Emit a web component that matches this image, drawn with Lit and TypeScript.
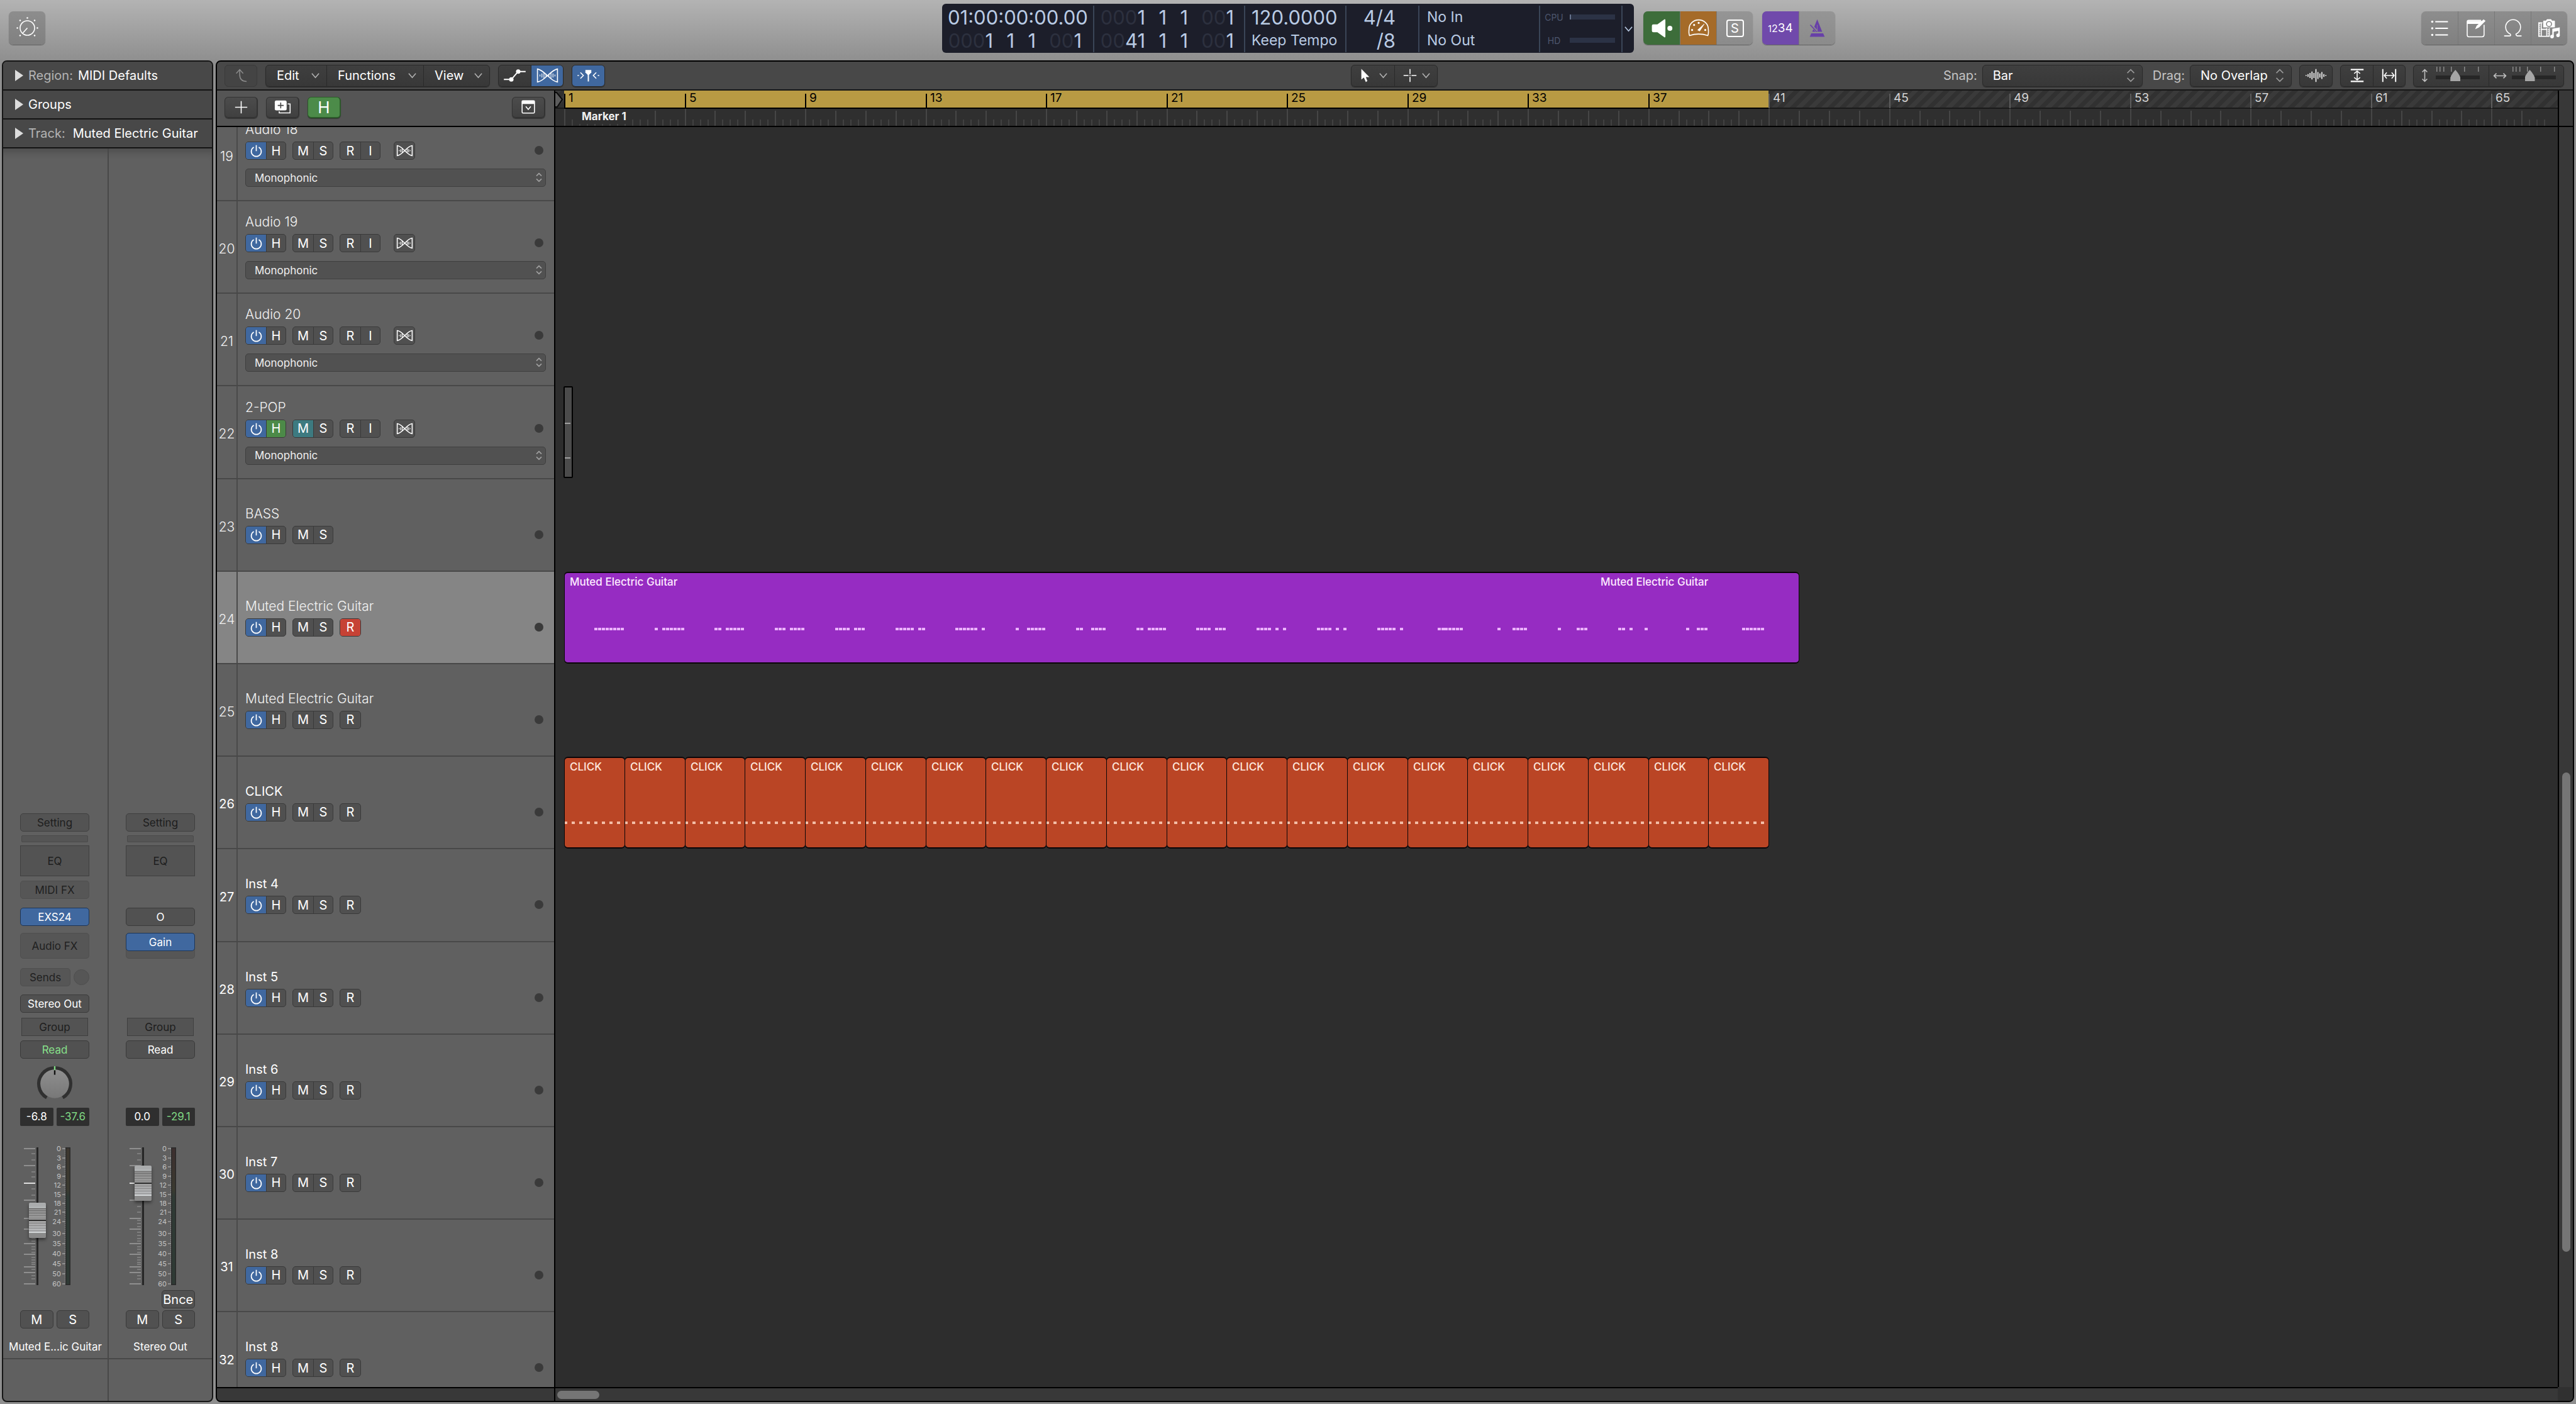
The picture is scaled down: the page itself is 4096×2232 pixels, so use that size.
import { LitElement, html, css, svg, nothing } from "lit";
import type { TemplateResult } from "lit";
import { customElement, property } from "lit/decorators.js";
import { classMap } from "lit/directives/class-map.js";
import { styleMap } from "lit/directives/style-map.js";

const SCALE = 0.8;
const icon = (w: number, h: number, body: unknown) => html`<svg
  class="icon" width=${Math.round(w * SCALE)} height=${Math.round(h * SCALE)}
  viewBox="0 0 ${w} ${h}" fill="none" stroke="currentColor" stroke-width="2" aria-hidden="true">${body}</svg>`;

const chevron = () => icon(16, 10, svg`<path d="M1 1L8 9L15 1"/>`);
const upDown = () => icon(18, 28, svg`<path d="M2 9L9 2L16 9M2 19L9 26L16 19"/>`);
const upDownSmall = () => icon(12, 20, svg`<path d="M1 7L6 2L11 7M1 13L6 18L11 13"/>`);

const icons = {
  knob: () => icon(44, 44, svg`<circle cx="22" cy="22" r="14.5"/><path d="M22 22L13 32"/>
    <g fill="currentColor" stroke="none"><circle cx="22" cy="2" r="1.6"/><circle cx="7.5" cy="7" r="1.6"/><circle cx="36.5" cy="7" r="1.6"/>
    <circle cx="2" cy="22" r="1.6"/><circle cx="42" cy="22" r="1.6"/><circle cx="7.5" cy="37" r="1.6"/><circle cx="36.5" cy="37" r="1.6"/></g>`),
  back: () => icon(24, 28, svg`<path d="M23 26C13 26 9 20 9 12V2M2 10L9 2L16 10"/>`),
  automation: () => icon(46, 28, svg`<path d="M1 22H12M16 22L30 6M30 6H45" stroke-width="2.5"/>
    <g fill="currentColor" stroke="none"><circle cx="16" cy="22" r="4.5"/><circle cx="30" cy="6" r="4.5"/></g>`),
  flex: () => icon(44, 30, svg`<path d="M2 2V28C16 27 28 4 42 2V28C28 27 16 4 2 2Z"/>
    <path d="M7 13V17M11 11V19M15 9V21M19 12V18M25 12V18M29 9V21M33 11V19M37 13V17" stroke-width="1.5"/>`),
  flexSmall: () => icon(34, 24, svg`<path d="M2 2V22C13 21 21 3 32 2V22C21 21 13 3 2 2Z"/>
    <path d="M6 11V13M9 9V15M12 8V16M22 8V16M25 9V15M28 11V13" stroke-width="1.5"/>`),
  catchFilter: () => icon(46, 28, svg`<path d="M1 14H4M7 8L13 14L7 20M39 8L33 14L39 20M42 14H45"/>
    <path d="M17 3H29V8L23 14L17 8Z" fill="currentColor" stroke="none"/><path d="M23 12V26" stroke-width="2.5"/>`),
  plus: () => icon(26, 26, svg`<path d="M13 1V25M1 13H25"/>`),
  duplicate: () => icon(34, 28, svg`<rect x="1" y="1" width="24" height="20" rx="3" fill="currentColor" stroke="none"/>
    <path d="M13 5V17M7 11H19" stroke="#444"/><path d="M27 8H32V26H10V23"/>`),
  panel: () => icon(28, 28, svg`<rect x="1.5" y="1.5" width="25" height="25" rx="2"/><rect x="1" y="1" width="26" height="7" fill="currentColor" stroke="none"/>
    <path d="M9 13L14 19L19 13"/>`),
  pointer: () => icon(22, 30, svg`<path d="M3 2V23L8 19L12 28L15 26L12 18L19 18Z" fill="currentColor" stroke="none"/>`),
  crosshair: () => icon(28, 28, svg`<path d="M14 1V11M14 17V27M1 14H11M17 14H27M14 13V15" stroke-width="2"/>`),
  wave: () => icon(44, 28, svg`<path d="M2 13V15M6 11V17M10 9V19M14 6V22M18 9V19M22 1V27M26 7V21M30 10V18M34 7V21M38 11V17M42 13V15"/>`),
  fitVertical: () => icon(28, 30, svg`<path d="M1 3H27M1 27H27" stroke-width="3"/><path d="M14 6V24M8 11L14 6L20 11M8 19L14 24L20 19"/>`),
  fitHorizontal: () => icon(30, 28, svg`<path d="M2 1V27M28 1V27" stroke-width="2.5"/><path d="M5 14H25M10 8L5 14L10 20M20 8L25 14L20 20"/>`),
  zoomVertical: () => icon(14, 28, svg`<path d="M7 2V26M2 7L7 2L12 7M2 21L7 26L12 21"/>`),
  zoomHorizontal: () => icon(28, 14, svg`<path d="M2 7H26M7 2L2 7L7 12M21 2L26 7L21 12"/>`),
  speaker: () => icon(44, 40, svg`<g fill="currentColor" stroke="none"><path d="M2 15Q2 12 5 12H13L27 2Q29 1 29 4V36Q29 39 27 38L13 28H5Q2 28 2 25Z"/><circle cx="38" cy="20" r="5"/></g>`),
  gauge: () => icon(42, 36, svg`<path d="M3 33Q1 29 2 20A19 18 0 0 1 40 20Q41 29 39 33Q21 27 3 33Z"/><path d="M19 22L32 10L23 24Z" fill="currentColor" stroke-width="1"/>
    <g fill="currentColor" stroke="none"><circle cx="8" cy="22" r="2"/><circle cx="12" cy="12" r="2"/><circle cx="21" cy="8" r="2"/><circle cx="34" cy="22" r="2"/></g>`),
  metronome: () => icon(34, 38, svg`<path d="M17 1L27 26H7Z" fill="currentColor" stroke="none"/><path d="M5 29H29L32 36H2Z" fill="currentColor" stroke="none"/>
    <path d="M5 13L16 25" stroke="#8e8e8e" stroke-width="5"/><path d="M17 12V26" stroke="#8e8e8e" stroke-width="1"/><path d="M3 12L16 26"/>`),
  list: () => icon(36, 32, svg`<path d="M9 3H34M9 16H34M9 29H34" stroke-width="2.5"/>
    <g fill="currentColor" stroke="none"><circle cx="3" cy="3" r="2.2"/><circle cx="3" cy="16" r="2.2"/><circle cx="3" cy="29" r="2.2"/></g>`),
  notepad: () => icon(42, 38, svg`<path d="M36 12V32Q36 36 32 36H5Q2 36 2 32V6Q2 3 5 3H30"/><path d="M2 4H33L26 10H2Z" fill="currentColor" stroke="none"/>
    <path d="M18 21L21 14L35 1L39 4L26 17Z" fill="currentColor" stroke="none"/>`),
  loop: () => icon(38, 36, svg`<path d="M1 34H11Q16 34 13 30A15 15 0 1 1 25 30Q24 32 27 34H36"/>`),
  media: () => icon(44, 40, svg`<rect x="1" y="9" width="21" height="27"/><path d="M6 9V36M17 9V36M6 22H17" stroke-width="2"/><path d="M3 10V36M20 10V36" stroke-dasharray="2 2"/>
    <path d="M11 4H15L17 1H26L28 4H32Q34 4 34 6V19H9V6Q9 4 11 4Z" fill="currentColor" stroke="#868686" stroke-width="1.5"/>
    <circle cx="21.5" cy="11.500" r="5" stroke="#868686" stroke-width="2"/>
    <path d="M28 21L43 18V34H40V25L31 27V37H28Z" fill="currentColor" stroke="none"/>
    <g fill="currentColor" stroke="none"><circle cx="27.5" cy="36.500" r="3.5"/><circle cx="39.500" cy="34" r="3.500"/></g>`),
  power: () => icon(24, 26, svg`<path d="M7 6A10 10 0 1 0 17 6M12 2V14" stroke-width="2.2"/>`),
};

const shared = css`
  :host { box-sizing: border-box; }
  *, *::before, *::after { box-sizing: border-box; }
  button, select, input { font: inherit; color: inherit; margin: 0; padding: 0; border: 0; background: none; }
  button { display: flex; align-items: center; justify-content: center; }
  .icon { display: block; flex: none; overflow: visible; }
  select { appearance: none; }
`;

/* ---------- Transport display ---------- */

@customElement("lcd-display")
export class LcdDisplay extends LitElement {
  static styles = [shared, css`
    :host { display: grid; grid-template-columns: 240px 240px 161px 116px 192px 131px 20px; height: 78px; background: #1c1e2a; border-radius: 6px; color: #b9cbe4; font-size: 31px; }
    .cell { display: grid; grid-template-rows: 37px 37px; align-content: start; margin: 3px 0; border-left: 2px solid #3a4557; line-height: 37px; white-space: nowrap; }
    .cell:first-child { border-left: 0; }
    .time { padding-left: 9px; }
    .digits { display: grid; grid-template-columns: 81px 34px 34px 73px; text-align: right; }
    .dim { color: #2c303e; }
    .tempo { padding-left: 10px; }
    .word { font-size: 23px; }
    .sign { text-align: right; padding-right: 36px; }
    .io { padding-left: 12px; font-size: 23px; }
    .load { display: grid; grid-template-columns: 30px 72px; column-gap: 10px; padding-left: 7px; align-items: center; font-size: 14px; color: #4e576e; }
    .load span { text-align: center; }
    .meter { height: 8px; background: #2b3245; }
    .meter.on { border-left: 2px solid #65728c; }
    .more { border-left: 2px solid #3a4557; margin: 3px 0; }
  `];
  digits(bar: string, pad: string) {
    return html`<div class="digits"><span><span class="dim">${pad}</span>${bar}</span><span>1</span><span>1</span><span><span class="dim">00</span>1</span></div>`;
  }
  render() {
    return html`
      <div class="cell"><span class="time">01:00:00:00.00</span>${this.digits("1", "000")}</div>
      <div class="cell">${this.digits("1", "000")}${this.digits("41", "00")}</div>
      <div class="cell tempo"><span>120.0000</span><span class="word">Keep Tempo</span></div>
      <div class="cell sign"><span>4/4</span><span>/8</span></div>
      <div class="cell io"><span>No In</span><span>No Out</span></div>
      <div class="cell load"><span>CPU</span><div class="meter on"></div><span>HD</span><div class="meter"></div></div>
      <button class="more" aria-label="Display options">${chevron()}</button>`;
  }
}

/* ---------- Mixer channel strip ---------- */

const FADER_MAJOR = [2, 29, 57, 84, 113, 130, 153, 170, 190, 199, 217];
const FADER_MINOR = [10, 20, 39, 47, 66, 76, 94, 103, 116, 121, 126, 135, 140, 145, 149, 158, 162, 167, 175, 179, 183, 186, 194, 204, 209];
const METER: [string, number][] = [["0", 2], ["3", 17], ["6", 31], ["9", 46], ["12", 60], ["15", 75], ["18", 89], ["21", 103], ["24", 118], ["30", 137], ["35", 153], ["40", 169], ["45", 185], ["50", 201], ["60", 217]];

@customElement("channel-strip")
export class ChannelStrip extends LitElement {
  @property() name = "";
  @property() gain = "";
  @property() peak = "";
  @property({ type: Number }) level = 0;
  @property({ type: Boolean }) master = false;
  static styles = [shared, css`
    :host { display: flex; flex-direction: column; justify-content: flex-end; font-size: 17px; color: #fff; }
    .stack { width: 110px; margin-left: 27px; display: flex; flex-direction: column; }
    .slot { height: 29px; display: flex; gap: 5px; }
    .slot > button { flex: 1; min-width: 0; border: 1px solid #3a3a3a; border-radius: 5px; background: #515151; }
    .slot > button.dim { color: #1d1d1d; border-color: #3f3f3f; background: #535353; }
    .slot > button.ghost { color: #1f1f1f; border-color: #4f4f4f; background: #565656; }
    .slot > button.square { border-radius: 0; }
    .slot > button.blue { background: #40689f; border-color: #1d3556; }
    .slot > button.green { color: #87e08a; }
    .slot > button.knobless { flex: none; width: 25px; height: 25px; border-radius: 50%; margin-top: 2px; }
    .gr { height: 11px; margin: 6px 2px 0; border: 1px solid #4a4a4a; background: #555; border-radius: 2px; }
    .eq { height: 49px; margin-top: 5px; }
    .midi { margin-top: 7px; }
    .inst { margin-top: 14px; }
    .fx { height: 41px; margin-top: 11px; }
    .fx.loaded { border: 1px solid #4f4f4f; background: #565656; border-radius: 5px; }
    .fx.loaded > button { height: 29px; margin: -1px; }
    .sends { margin-top: 15px; }
    .out { margin-top: 13px; }
    .group { margin: 8px 2px 0; }
    .auto { margin-top: 7px; }
    .pan { height: 56px; margin-top: 12px; justify-content: center; }
    .vals { margin-top: 10px; }
    .vals output { flex: 1; text-align: center; line-height: 29px; background: #2f2f2f; border-radius: 2px; }
    .vals .peak { color: #7fd883; }
    .fader { position: relative; height: 219px; margin-top: 34px; }
    .scale { display: block; overflow: visible; }
    .scale text { font-size: 11px; fill: #c4c4c4; }
    .fader input { position: absolute; left: 14px; top: 0; width: 27px; height: 219px; appearance: none; writing-mode: vertical-lr; direction: rtl;
      background: linear-gradient(90deg, transparent 12px, #262626 12px 15px, transparent 15px); }
    .fader input::-webkit-slider-runnable-track { width: 27px; height: 219px; }
    .fader input::-webkit-slider-thumb { appearance: none; width: 27px; height: 56px; border-radius: 2px; box-shadow: 0 3px 5px rgba(0, 0, 0, .45);
      background:
        linear-gradient(#aaacad 0 7px, #d5dadb 7px 8px, transparent 8px 27px, #2b2b2b 27px 29px, transparent 29px 47px, #e0e5e6 47px 48px, #8a8a8a 48px 56px),
        repeating-linear-gradient(rgba(0, 0, 0, .22) 0 1px, transparent 1px 4px),
        linear-gradient(#808080, #a0a0a0 28px, #bcbec0 48px); }
    .bounce { margin-top: 8px; font-size: 20px; }
    .bounce > span { flex: 1; }
    .ms { margin-top: 3px; font-size: 20px; }
    .name { margin-top: 17px; line-height: 24px; text-align: center; white-space: nowrap; }
    .foot { height: 68px; margin-top: 6px; border-top: 2px solid #484848; }
  `];
  scale() {
    const tick = (y: number, x: number, w: number, c: string) => svg`<rect x=${x} y=${y} width=${w} height="1.6" fill=${c}/>`;
    const dots = Array.from({ length: 67 }, (_, i) => 2 + i * 3.2);
    return html`<svg class="scale" width="110" height="219" viewBox="0 0 110 219" aria-hidden="true">
      <defs><linearGradient id="m" x2="0" y2="1"><stop offset="0" stop-color=${this.master ? "#3d2f2f" : "#3d3730"}/><stop offset=".3" stop-color="#3b3a30"/><stop offset=".36" stop-color="#2f3a35"/></linearGradient></defs>
      ${FADER_MAJOR.map((y) => tick(y - 0.8, 6, 18, y === 57 ? "#fff" : "#9b9b9b"))}
      ${FADER_MINOR.map((y) => tick(y - 0.8, 18, 6, "#858585"))}
      ${METER.map(([t, y]) => svg`${tick(y - 0.8, 67, 6, "#9b9b9b")}<text x="65" y=${y + 4} text-anchor="end">${t}</text>`)}
      ${dots.map((y) => tick(y, 71, 1.5, "#959595"))}
      <rect x="72" width="8" height="219" fill="#2a2a2a"/><rect x="73.5" y="1.5" width="5" height="216" fill="url(#m)"/>
    </svg>`;
  }
  pan() {
    return html`<svg class="icon" width="56" height="56" viewBox="0 0 70 70" role="img" aria-label="Pan">
      <defs><linearGradient id="k" x2="0" y2="1"><stop stop-color="#8f8f8f"/><stop offset="1" stop-color="#787878"/></linearGradient></defs>
      <path d="M19.25 62.3A31.5 31.5 0 1 1 50.75 62.3" fill="none" stroke="#303030" stroke-width="7"/>
      <circle cx="35" cy="35" r="28.5" fill="url(#k)"/><rect x="33.5" y="0" width="3" height="8" fill="#7fd883"/><rect x="33.5" y="8" width="3" height="9" fill="#111"/></svg>`;
  }
  render() {
    const m = this.master;
    return html`
      <div class="stack">
        <div class="slot"><button class="dim">Setting</button></div>
        <div class="gr"></div>
        <div class="slot eq"><button class="dim square">EQ</button></div>
        <div class="slot midi">${m ? nothing : html`<button class="ghost">MIDI FX</button>`}</div>
        <div class="slot inst">${m ? html`<button>O</button>` : html`<button class="blue">EXS24</button>`}</div>
        <div class=${classMap({ slot: true, fx: true, loaded: m })}>${m ? html`<button class="blue">Gain</button>` : html`<button class="ghost">Audio FX</button>`}</div>
        <div class="slot sends">${m ? nothing : html`<button class="ghost">Sends</button><button class="ghost knobless" aria-label="Send level"></button>`}</div>
        <div class="slot out">${m ? nothing : html`<button>Stereo Out</button>`}</div>
        <div class="slot group"><button class="dim square">Group</button></div>
        <div class="slot auto"><button class=${m ? "" : "green"}>Read</button></div>
        <div class="slot pan">${m ? nothing : this.pan()}</div>
        <div class="slot vals"><output>${this.gain}</output><output class="peak">${this.peak}</output></div>
        <div class="fader">${this.scale()}<input type="range" min="0" max="1000" .value=${String(this.level)} aria-label="${this.name} volume" /></div>
        <div class="slot bounce">${m ? html`<span></span><button>Bnce</button>` : nothing}</div>
        <div class="slot ms"><button aria-label="Mute">M</button><button aria-label="Solo">S</button></div>
      </div>
      <div class="name">${this.name}</div>
      <div class="foot"></div>`;
  }
}

/* ---------- Track header ---------- */

interface Track { num: number; name: string; audio?: boolean; bold?: boolean; rec?: boolean; selected?: boolean; armed?: boolean; hidden?: boolean; muted?: boolean; }

@customElement("track-header")
export class TrackHeader extends LitElement {
  @property({ attribute: false }) track!: Track;
  static styles = [shared, css`
    :host { display: block; }
    .row { display: grid; grid-template-columns: 33px 1fr; height: 100%; background: #606060; border-bottom: 2px solid #484848; color: #f2f2f2; font-weight: 300; }
    .row.selected { background: #858585; }
    .row.bold { color: #fff; font-weight: 400; }
    .num { display: flex; align-items: center; justify-content: center; border-right: 2px solid #4a4a4a; padding-top: 5px; font-size: 21px; }
    .body { display: flex; flex-direction: column; justify-content: center; padding: 0 13px 0 12px; }
    .name { font-size: 21px; line-height: 24px; margin-bottom: 7px; }
    .bold .num, .bold .name { font-size: 20px; }
    .controls { display: flex; gap: 10px; height: 29px; font-weight: 400; font-size: 20px; color: #fff; }
    .seg { display: flex; border: 1px solid #3a3a3a; border-radius: 5px; overflow: hidden; background: #505050; }
    .seg button { width: 32px; }
    .seg button + button { width: 31px; border-left: 1px solid #3a3a3a; }
    .seg.gap { margin-left: 11px; }
    .blue { background: #40689f; }
    .green { background: #4c8a48; }
    .teal { background: #3d7a80; }
    .red { background: #c64235; }
    .dot { width: 14px; height: 14px; margin: 7px 4px 0 auto; border-radius: 50%; background: #3a3a3a; }
    .mode { position: relative; display: block; margin-top: 14px; height: 29px; font-size: 17px; font-weight: 400; color: #f0f0f0; }
    .mode select { width: 100%; height: 100%; padding: 0 14px; border: 1px solid #3f3f3f; border-radius: 5px; background: #515151; }
    .mode .icon { position: absolute; right: 6px; top: 6px; color: #a2a2a2; }
  `];
  render() {
    const t = this.track;
    return html`<div class=${classMap({ row: true, selected: !!t.selected, bold: !!t.bold })}>
      <div class="num">${t.num}</div>
      <div class="body">
        <div class="name">${t.name}</div>
        <div class="controls">
          <div class="seg"><button class="blue" aria-label="Track on">${icons.power()}</button><button class=${t.hidden ? "green" : ""} aria-label="Hide">H</button></div>
          <div class="seg"><button class=${t.muted ? "teal" : ""} aria-label="Mute">M</button><button aria-label="Solo">S</button></div>
          ${t.audio
            ? html`<div class="seg"><button aria-label="Record">R</button><button aria-label="Input monitoring">I</button></div><div class="seg gap"><button aria-label="Flex">${icons.flexSmall()}</button></div>`
            : t.rec ? html`<div class="seg"><button class=${t.armed ? "red" : ""} aria-label="Record">R</button></div>` : nothing}
          <span class="dot"></span>
        </div>
        ${t.audio ? html`<label class="mode"><select aria-label="Flex mode"><option>Monophonic</option></select>${upDownSmall()}</label>` : nothing}
      </div>
    </div>`;
  }
}

/* ---------- Timeline ---------- */

const ORIGIN = 14;
const BAR = 47.88;
const barX = (bar: number) => Math.round(ORIGIN + (bar - 1) * BAR);

@customElement("time-ruler")
export class TimeRuler extends LitElement {
  static styles = [shared, css`
    :host { position: relative; display: block; overflow: hidden; background: #2f2f2f; border-bottom: 2px solid #000; }
    .numbers { display: flex; height: 29px; padding-left: 14px; border-bottom: 2px solid #1a1a1a; background: repeating-linear-gradient(135deg, #3a3a3a 0 7px, #313131 7px 14px); }
    .numbers span { flex: none; padding-left: 7px; font-size: 19px; line-height: 24px; color: #d6d6d6; }
    .numbers .cycle { background: #b89a43; color: #000; box-shadow: 0 2px 0 #000; }
    .marker { position: relative; z-index: 1; display: flex; padding-left: 34px; font-size: 17px; line-height: 24px; font-weight: 700; color: #f0f0f0; }
    .marker span { padding: 0 8px; background: #2f2f2f; }
    .ticks { position: absolute; left: 0; top: 0; }
  `];
  render() {
    const groups = Array.from({ length: 17 }, (_, i) => 1 + i * 4);
    const bars = Array.from({ length: 66 }, (_, i) => i + 1);
    return html`
      <div class="numbers">${groups.map((b) => html`<span class=${b < 41 ? "cycle" : ""} style=${styleMap({ width: `${barX(b + 4) - barX(b)}px` })}>${b}</span>`)}</div>
      <div class="marker"><span>Marker 1</span></div>
      <svg class="ticks" width="3184" height="56" aria-hidden="true">
        ${bars.map((b) => {
          const x = barX(b);
          const major = (b - 1) % 4 === 0;
          const line = major ? svg`<rect x=${x} y="5" width="2" height="23" fill=${b < 41 ? "#000" : "#5c5c5c"}/><rect x=${x} y="29" width="2" height="27" fill="#464646"/>`
            : svg`<rect x=${x} y="32" width="2" height="24" fill="#464646"/>`;
          return svg`${line}${[1, 2, 3].map((q) => svg`<rect x=${Math.round(x + q * BAR / 4)} y="46" width="2" height="10" fill="#414141"/>`)}`;
        })}
        <path d="M-1 3H2L11 14L3 26H-1Z" fill="#5c5c5c" stroke="#0c0c0c" stroke-width="2"/>
      </svg>`;
  }
}

const RIFF = [
  [0, 1, 2, 3, 4, 5, 6, 7], [0, 2, 3, 4, 5, 6, 7], [0, 1, 3, 4, 5, 6, 7], [0, 1, 2, 4, 5, 6, 7], [0, 1, 2, 3, 5, 6, 7],
  [0, 1, 2, 3, 4, 6, 7], [0, 1, 2, 3, 4, 5, 7], [0, 3, 4, 5, 6, 7], [0, 1, 4, 5, 6, 7], [0, 1, 3, 4, 5, 6, 7],
  [0, 1, 2, 3, 5, 6, 7], [0, 1, 2, 3, 5, 7], [0, 1, 2, 3, 5, 7], [0, 1, 2, 3, 4, 6], [0, 1, 2, 3, 4, 5, 6],
  [0, 4, 5, 6, 7], [0, 5, 6, 7], [0, 1, 3, 7], [2, 5, 6, 7], [1, 2, 3, 4, 5, 6],
];

@customElement("midi-region")
export class MidiRegion extends LitElement {
  @property({ attribute: false }) titles: { text: string; at: number }[] = [];
  @property({ attribute: false }) notes: number[] = [];
  @property({ type: Number }) pitch = 90;
  @property() tint = "purple";
  static styles = [shared, css`
    :host { display: block; overflow: hidden; border: 2px solid #0a0508; border-width: 2px 1px; border-radius: 6px; font-size: 17px; font-weight: 500; line-height: 24px; }
    .fill { position: relative; height: 100%; border-radius: 4px; overflow: hidden; }
    .purple { background: #962cc2; color: #fdeaff; --note: #ecb3ff; }
    .orange { background: #ba4525; color: #ffe9df; --note: #f3bda6; }
    .title { position: absolute; top: 2px; white-space: nowrap; }
    svg { position: absolute; left: 0; top: 0; width: 100%; height: 100%; }
    rect { fill: var(--note); }
  `];
  render() {
    return html`<div class="fill ${this.tint}">
      ${this.titles.map((t) => html`<span class="title" style=${styleMap({ left: `${t.at}px` })}>${t.text}</span>`)}
      <svg aria-hidden="true">${this.notes.map((n) => svg`<rect x=${n} y=${this.pitch - 2} width="5" height="4"/>`)}</svg>
    </div>`;
  }
}

/* ---------- Main window ---------- */

const TRACKS: Track[] = [
  { num: 19, name: "Audio 18", audio: true },
  { num: 20, name: "Audio 19", audio: true },
  { num: 21, name: "Audio 20", audio: true },
  { num: 22, name: "2-POP", audio: true, hidden: true, muted: true },
  { num: 23, name: "BASS" },
  { num: 24, name: "Muted Electric Guitar", rec: true, selected: true, armed: true },
  { num: 25, name: "Muted Electric Guitar", rec: true },
  { num: 26, name: "CLICK", rec: true, bold: true },
  { num: 27, name: "Inst 4", rec: true, bold: true },
  { num: 28, name: "Inst 5", rec: true, bold: true },
  { num: 29, name: "Inst 6", rec: true, bold: true },
  { num: 30, name: "Inst 7", rec: true, bold: true },
  { num: 31, name: "Inst 8", rec: true, bold: true },
  { num: 32, name: "Inst 8", rec: true, bold: true },
];

@customElement("app-root")
export class AppRoot extends LitElement {
  static styles = [shared, css`
    :host { display: grid; grid-template-rows: 96px 1fr; height: 100vh; overflow: hidden; background: #8f8f8f; color: #fff;
      font-family: Inter, "Liberation Sans", sans-serif; font-size: 20px; }

    .top { display: grid; grid-template-columns: 1fr auto 1fr; align-items: center; padding: 0 14px 7px; background: linear-gradient(#b3b3b3, #8f8f8f); }
    .side { display: flex; align-items: center; justify-content: space-between; padding-left: 15px; }
    .side.left { padding-left: 0; }
    .bank { display: flex; height: 53px; border-radius: 7px; overflow: hidden; background: linear-gradient(#8d8d8d, #808080); box-shadow: 0 1px 1px #5f5f5f; }
    .bank.mode { background: linear-gradient(#959595, #8b8b8b); }
    .bank button { width: 58px; }
    .bank button + button { border-left: 1px solid #787878; }
    .bank .play { background: #3d6d3a; }
    .bank .tempo { background: #a56b29; }
    .bank .count { background: #7049ab; align-items: baseline; padding-top: 16px; font-size: 19px; line-height: 22px; }
    .count .one { font-size: 14px; }
    .count .two { font-size: 16px; }
    .bank .click { color: #6840a8; }
    .banks { display: flex; gap: 15px; }
    .solo { width: 28px; height: 28px; border: 2px solid #fff; border-radius: 4px; font-size: 20px; line-height: 24px; text-align: center; }

    .main { display: grid; grid-template-columns: 336px 1fr; gap: 4px; padding: 0 3px 3px; min-height: 0; }
    .window { border: 2px solid #000; border-radius: 8px; overflow: hidden; min-height: 0; }

    .inspector { display: flex; flex-direction: column; border-color: #161616; background: #606060; }
    .section { display: flex; align-items: center; height: 46px; padding-left: 19px; justify-content: flex-start; background: #484848; border-bottom: 2px solid #141414; color: #fff; white-space: nowrap; }
    .section::before { content: ""; width: 13px; height: 18px; margin-right: 8px; background: #dcdcdc; clip-path: polygon(0 0, 100% 50%, 0 100%); }
    .section .key { color: #b4b4b4; margin-right: 8px; }
    .section .key.wide { margin-right: 12px; }
    .strips { flex: 1; display: grid; grid-template-columns: 168px 1fr; min-height: 0; box-shadow: inset 0 14px 12px -8px rgba(0, 0, 0, .2); }
    .strips channel-strip:first-child { border-right: 2px solid #484848; }

    .tracks { display: grid; grid-template-rows: 46px 1fr; background: #2d2d2d; }
    .menubar { display: grid; grid-template-columns: 1fr auto 1fr; align-items: center; padding: 0 14px 0 12px; background: #484848; border-bottom: 2px solid #161616; }
    .tools { display: flex; align-items: center; gap: 13px; }
    .tools.end { justify-content: flex-end; gap: 12px; }
    .btns { display: flex; height: 35px; border: 1px solid #2a2a2a; border-radius: 6px; overflow: hidden; background: linear-gradient(#3f3f3f, #383838); box-shadow: 0 1px 1px rgba(0, 0, 0, .4); }
    .btns > * + * { border-left: 1px solid #2a2a2a; }
    .btns button { width: 51px; }
    .btns.faint { background: #444; border-color: #3a3a3a; color: #8a8a8a; box-shadow: none; }
    .btns.head { background: linear-gradient(#4c4c4c, #404040); border-color: #333; }
    .btns .menu { justify-content: space-between; padding: 0 11px 0 17px; }
    .menu .icon, .tool .icon + .icon { color: #b0b0b0; }
    .btns .menu:nth-child(1) { width: 96px; }
    .btns .menu:nth-child(2) { width: 154px; }
    .btns .menu:nth-child(3) { width: 105px; }
    .btns .tool { width: 68px; justify-content: space-between; padding: 0 11px 0 13px; }
    .btns .on { background: #40689f; }
    .field { display: flex; align-items: center; gap: 8px; color: #c4c4c4; }
    .field + .field { margin-left: 4px; }
    .pick { position: relative; display: block; color: #fff; }
    .pick select { height: 35px; padding: 0 16px; border: 1px solid #2a2a2a; border-radius: 6px; background: linear-gradient(#3f3f3f, #383838); box-shadow: 0 1px 1px rgba(0, 0, 0, .4); }
    .pick .snap { width: 255px; }
    .pick .drag { width: 162px; }
    .pick .icon { position: absolute; right: 12px; top: 6px; color: #9a9a9a; }
    .zoom { display: flex; align-items: center; gap: 12px; width: 119px; padding-left: 12px; color: #c0c0c0; }
    .zoom.h { padding-left: 6px; gap: 8px; }
    .range { position: relative; display: flex; flex: 1; height: 100%; margin-right: 12px; align-items: center; }
    .range svg { position: absolute; left: 0; top: 2px; }
    .range input { width: 70px; height: 22px; appearance: none; background: linear-gradient(transparent 11px, #262626 11px 17px, transparent 17px); border-radius: 3px; }
    .range input::-webkit-slider-thumb { appearance: none; width: 16px; height: 18px; background: #a6a6a6; clip-path: polygon(50% 0, 72% 24%, 92% 52%, 100% 70%, 100% 100%, 0 100%, 0 70%, 8% 52%, 28% 24%); }

    .arrange { display: grid; grid-template-columns: 538px 1fr 24px; grid-template-rows: 58px 1fr 22px; min-height: 0; }
    .head { display: flex; align-items: center; gap: 13px; padding: 0 14px 3px 12px; background: #555; border-bottom: 2px solid #000; border-right: 2px solid #000; }
    .head .btns { height: 34px; padding: 0; align-items: stretch; gap: 0; }
    .head .hide { background: #4c8b49; border-color: #2c5a2a; font-size: 26px; }
    .head .last { margin-left: auto; }
    .btns .sole { width: 50px; }
    .list { overflow: hidden; border-right: 2px solid #000; }
    .list track-header, .lane { height: 147px; }
    .list track-header:nth-child(5n + 4), .lane:nth-child(5n + 4) { height: 148px; }
    .list track-header:first-child, .lane:first-child { margin-top: -29px; }
    .lanes { overflow: hidden; background: #2d2d2d; }
    .lane { position: relative; }
    .lane midi-region, .pop { position: absolute; top: 0; height: 146px; }
    .pop { border: 2px solid #000; border-radius: 2px; background: #4b4b4b; }
    .pop::before { content: ""; position: absolute; inset: 56px 2px 29px 0; border: 2px solid #a0a0a0; border-width: 2px 0; }
    .side-scroll { border-left: 2px solid #000; background: #383838; padding: 0 4px; }
    .side-head { border-left: 2px solid #000; border-bottom: 2px solid #000; background: #383838; }
    .thumb-v { width: 13px; height: 762px; margin-top: 1026px; border-radius: 7px; background: #757575; margin-left: 1px; }
    .bottom { background: #383838; border-top: 2px solid #000; }
    .bottom.first { border-right: 2px solid #000; }
    .bottom.corner { background: #303030; border-top: 0; }
    .thumb-h { width: 67px; height: 13px; margin: 4px 0 0 3px; border-radius: 7px; background: #757575; }
  `];

  lane(t: Track): TemplateResult | typeof nothing {
    const box = (from: number, to: number) => ({ left: `${barX(from)}px`, width: `${barX(to) - barX(from) + 1}px` });
    if (t.num === 22) return html`<div class="pop" style=${styleMap({ left: `${barX(1) - 1}px`, width: "15px" })}></div>`;
    if (t.num === 24) {
      const notes = RIFF.flatMap((slots, g) => slots.map((s) => Math.round((g * 2 + 1) * BAR + (s * BAR) / 8) - 1));
      const titles = [{ text: "Muted Electric Guitar", at: 8 }, { text: "Muted Electric Guitar", at: 1647 }];
      return html`<midi-region tint="purple" pitch="89" .titles=${titles} .notes=${notes} style=${styleMap(box(1, 42))}></midi-region>`;
    }
    if (t.num === 26) {
      const notes = Array.from({ length: 8 }, (_, i) => Math.round((i * BAR) / 4) - 1);
      return html`${Array.from({ length: 20 }, (_, i) => html`<midi-region tint="orange" pitch="103" .titles=${[{ text: "CLICK", at: 8 }]} .notes=${notes} style=${styleMap(box(1 + i * 2, 3 + i * 2))}></midi-region>`)}`;
    }
    return nothing;
  }

  zoomTicks() {
    return html`<svg width="70" height="8" aria-hidden="true">${[1, 6, 12, 24, 45, 67].map((x) => svg`<rect x=${x} width="1.5" height="8" fill="#8a8a8a"/>`)}</svg>`;
  }

  render() {
    return html`
      <header class="top">
        <div class="side left"><div class="bank"><button aria-label="Smart Controls">${icons.knob()}</button></div></div>
        <lcd-display></lcd-display>
        <div class="side">
          <div class="banks">
            <div class="bank mode"><button class="play" aria-label="Software monitoring">${icons.speaker()}</button><button class="tempo" aria-label="Low latency">${icons.gauge()}</button><button aria-label="Solo"><span class="solo">S</span></button></div>
            <div class="bank mode"><button class="count" aria-label="Count-in"><span class="one">1</span><span class="two">2</span><span>34</span></button><button class="click" aria-label="Metronome">${icons.metronome()}</button></div>
          </div>
          <div class="bank"><button aria-label="List editors">${icons.list()}</button><button aria-label="Note pad">${icons.notepad()}</button><button aria-label="Loop browser">${icons.loop()}</button><button aria-label="Media browser">${icons.media()}</button></div>
        </div>
      </header>
      <main class="main">
        <aside class="window inspector">
          <button class="section"><span class="key">Region:</span>MIDI Defaults</button>
          <button class="section">Groups</button>
          <button class="section"><span class="key wide">Track:</span>Muted Electric Guitar</button>
          <div class="strips">
            <channel-strip name="Muted E...ic Guitar" gain="-6.8" peak="-37.6" level="460"></channel-strip>
            <channel-strip name="Stereo Out" gain="0.0" peak="-29.1" level="825" master></channel-strip>
          </div>
        </aside>
        <section class="window tracks">
          <div class="menubar">
            <div class="tools">
              <div class="btns faint"><button class="sole" aria-label="Back">${icons.back()}</button></div>
              <div class="btns"><button class="menu"><span>Edit</span>${chevron()}</button><button class="menu"><span>Functions</span>${chevron()}</button><button class="menu"><span>View</span>${chevron()}</button></div>
              <div class="btns"><button aria-label="Automation">${icons.automation()}</button><button class="on" aria-label="Flex">${icons.flex()}</button></div>
              <div class="btns"><button class="on" aria-label="Catch">${icons.catchFilter()}</button></div>
            </div>
            <div class="btns"><button class="tool" aria-label="Pointer tool">${icons.pointer()}${chevron()}</button><button class="tool" aria-label="Marquee tool">${icons.crosshair()}${chevron()}</button></div>
            <div class="tools end">
              <label class="field">Snap:<span class="pick"><select class="snap"><option>Bar</option></select>${upDown()}</span></label>
              <label class="field">Drag:<span class="pick"><select class="drag"><option>No Overlap</option></select>${upDown()}</span></label>
              <div class="btns"><button aria-label="Waveform zoom">${icons.wave()}</button></div>
              <div class="btns"><button aria-label="Fit vertically">${icons.fitVertical()}</button><button aria-label="Fit horizontally">${icons.fitHorizontal()}</button></div>
              <div class="btns">
                <label class="zoom">${icons.zoomVertical()}<span class="range">${this.zoomTicks()}<input type="range" min="0" max="100" value="43" aria-label="Vertical zoom" /></span></label>
                <label class="zoom h">${icons.zoomHorizontal()}<span class="range">${this.zoomTicks()}<input type="range" min="0" max="100" value="38" aria-label="Horizontal zoom" /></span></label>
              </div>
            </div>
          </div>
          <div class="arrange">
            <div class="head">
              <div class="btns head"><button class="sole" aria-label="New track">${icons.plus()}</button></div>
              <div class="btns head"><button class="sole" aria-label="Duplicate track">${icons.duplicate()}</button></div>
              <div class="btns head hide"><button class="sole" aria-label="Hide tracks">H</button></div>
              <div class="btns head last"><button class="sole" aria-label="Global tracks">${icons.panel()}</button></div>
            </div>
            <time-ruler></time-ruler>
            <div class="side-head"></div>
            <div class="list">${TRACKS.map((t) => html`<track-header .track=${t}></track-header>`)}</div>
            <div class="lanes">${TRACKS.map((t) => html`<div class="lane">${this.lane(t)}</div>`)}</div>
            <div class="side-scroll"><div class="thumb-v"></div></div>
            <div class="bottom first"></div>
            <div class="bottom"><div class="thumb-h"></div></div>
            <div class="bottom corner"></div>
          </div>
        </section>
      </main>`;
  }
}
